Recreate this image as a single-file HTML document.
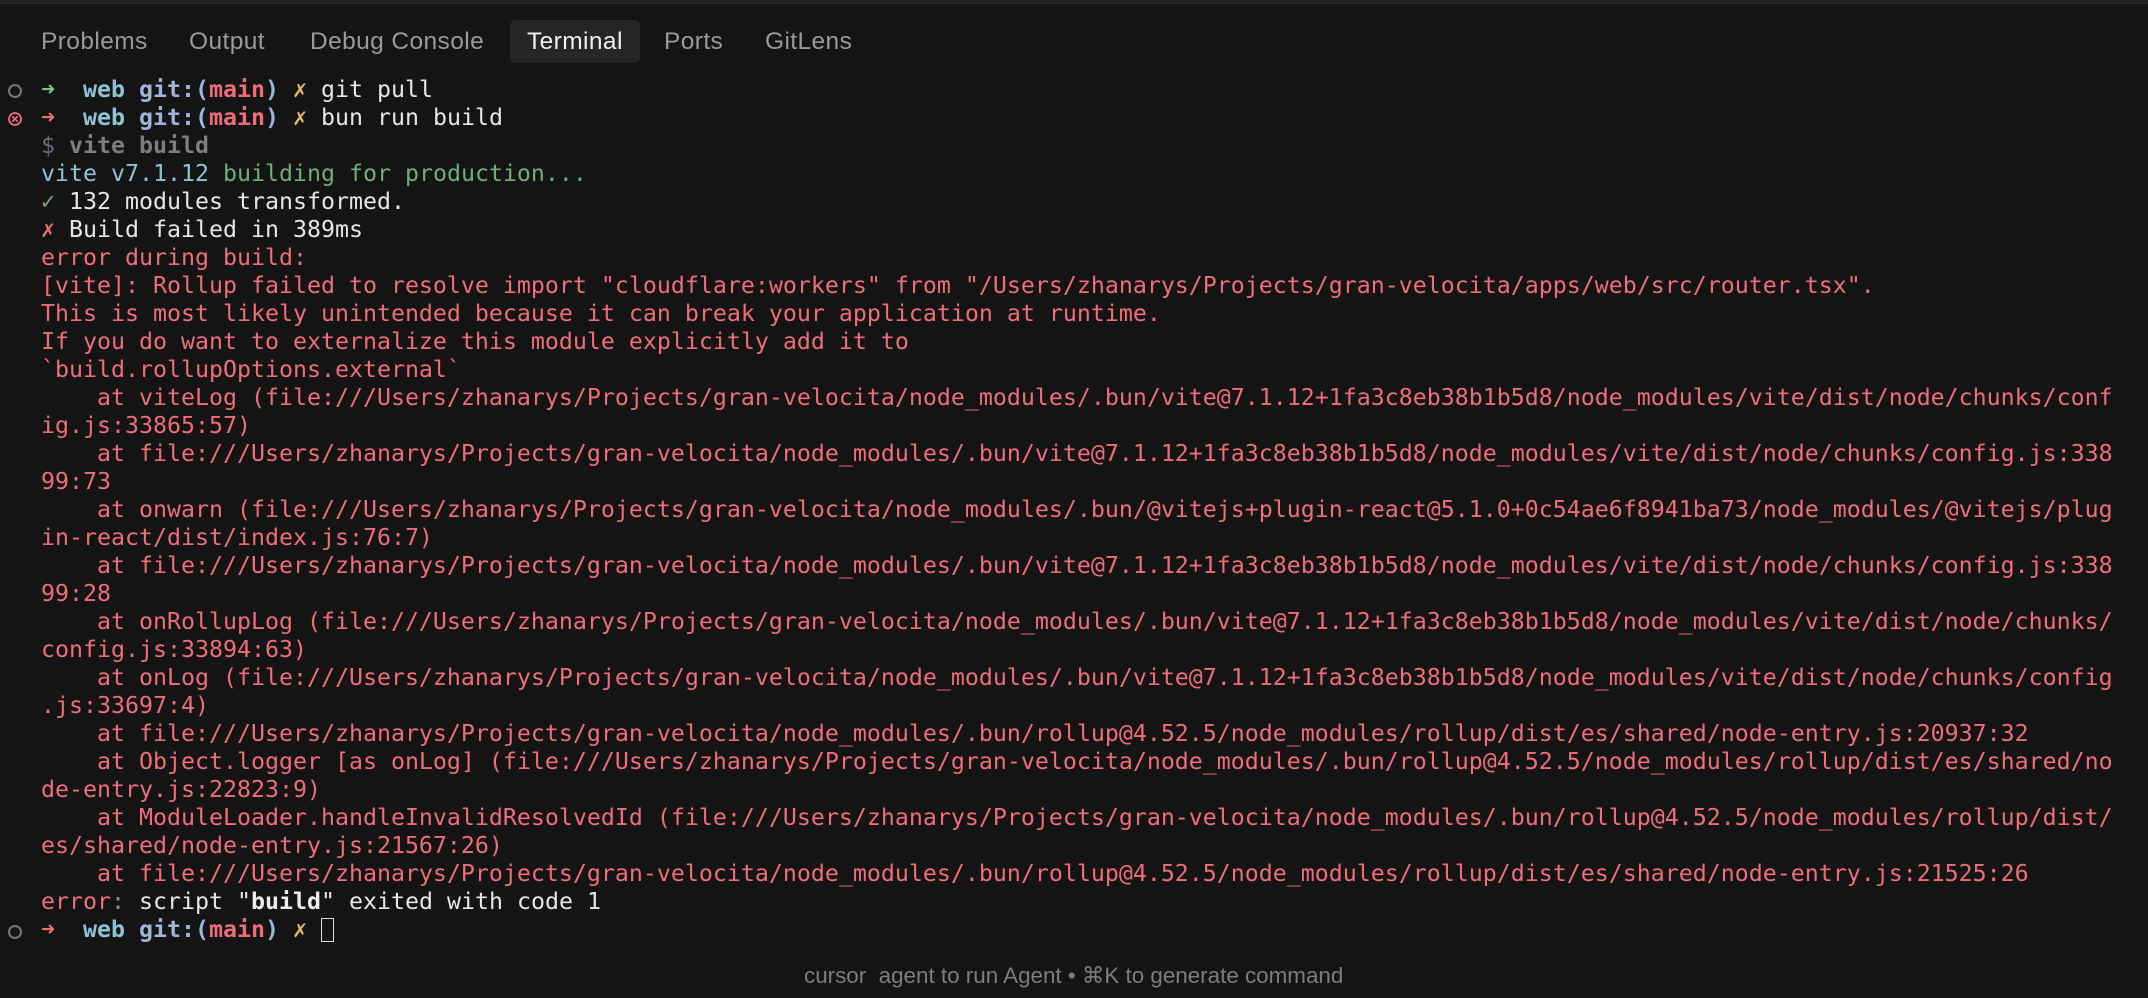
<!DOCTYPE html>
<html><head><meta charset="utf-8"><style>
html,body{margin:0;padding:0;background:#141414;width:2148px;height:998px;overflow:hidden}
.top{position:absolute;left:0;top:0;width:2148px;height:3px;background:#1f1f1f;border-bottom:1px solid #2a2a2a}
.tab{position:absolute;top:20px;height:43px;line-height:43px;font-family:"Liberation Sans",sans-serif;font-size:24.5px;color:#9a9a9a;letter-spacing:0.4px}
.tab.act{background:#262626;color:#f0f0f0;border-radius:6px;padding:0 17px}
.term{position:absolute;left:41px;top:76px;font-family:"DejaVu Sans Mono","Liberation Mono",monospace;font-size:23.25px;color:#e6e6e6}
.l{height:28.03px;line-height:28px;white-space:pre}
.r{color:#ee6d7a}.c{color:#8ec3d6;font-weight:bold}.b{color:#9fb4d8;font-weight:bold}.m{color:#ee6d7a;font-weight:bold}
.y{color:#e8b86a}.g{color:#6fae78}.cy{color:#8ec3d6}.gr{color:#7e7e7e;font-weight:bold}.pu{color:#76687a}
.ga{color:#7fc18a}.w{color:#ececec;font-weight:bold}
.ic{position:absolute;left:7px}
.hint{position:absolute;left:804px;top:963px;font-family:"Liberation Sans",sans-serif;font-size:22.4px;color:#7d7d7d}
.cur{display:inline-block;width:13px;height:24px;border:1.5px solid #dcdcdc;vertical-align:-5px;box-sizing:border-box}
</style></head><body>
<div class="top"></div>
<div class="tab" style="left:41px">Problems</div>
<div class="tab" style="left:189px">Output</div>
<div class="tab" style="left:310px">Debug Console</div>
<div class="tab act" style="left:510px">Terminal</div>
<div class="tab" style="left:664px">Ports</div>
<div class="tab" style="left:765px">GitLens</div>

<svg class="ic" style="top:83px" width="16" height="16"><circle cx="8" cy="8" r="6" fill="none" stroke="#777" stroke-width="2"/></svg>
<svg class="ic" style="top:111px" width="16" height="16"><circle cx="8" cy="8" r="6" fill="none" stroke="#ee6d7a" stroke-width="1.8"/><path d="M5.3 5.3L10.7 10.7M10.7 5.3L5.3 10.7" stroke="#ee6d7a" stroke-width="1.6"/></svg>
<svg class="ic" style="top:924px" width="16" height="16"><circle cx="8" cy="8" r="6" fill="none" stroke="#777" stroke-width="2"/></svg>

<div class="term">
<div class="l"><span class="ga">➜</span>  <span class="c">web</span> <span class="b">git:(</span><span class="m">main</span><span class="b">)</span> <span class="y">✗</span> git pull</div>
<div class="l"><span class="r">➜</span>  <span class="c">web</span> <span class="b">git:(</span><span class="m">main</span><span class="b">)</span> <span class="y">✗</span> bun run build</div>
<div class="l"><span class="pu">$</span> <span class="gr">vite build</span></div>
<div class="l"><span class="cy">vite v7.1.12</span> <span class="g">building for production...</span></div>
<div class="l"><span class="g">✓</span> 132 modules transformed.</div>
<div class="l"><span class="r">✗</span> Build failed in 389ms</div>
<div class="r">
<div class="l">error during build:</div>
<div class="l">[vite]: Rollup failed to resolve import "cloudflare:workers" from "/Users/zhanarys/Projects/gran-velocita/apps/web/src/router.tsx".</div>
<div class="l">This is most likely unintended because it can break your application at runtime.</div>
<div class="l">If you do want to externalize this module explicitly add it to</div>
<div class="l">`build.rollupOptions.external`</div>
<div class="l">    at viteLog (file:///Users/zhanarys/Projects/gran-velocita/node_modules/.bun/vite@7.1.12+1fa3c8eb38b1b5d8/node_modules/vite/dist/node/chunks/conf</div>
<div class="l">ig.js:33865:57)</div>
<div class="l">    at file:///Users/zhanarys/Projects/gran-velocita/node_modules/.bun/vite@7.1.12+1fa3c8eb38b1b5d8/node_modules/vite/dist/node/chunks/config.js:338</div>
<div class="l">99:73</div>
<div class="l">    at onwarn (file:///Users/zhanarys/Projects/gran-velocita/node_modules/.bun/@vitejs+plugin-react@5.1.0+0c54ae6f8941ba73/node_modules/@vitejs/plug</div>
<div class="l">in-react/dist/index.js:76:7)</div>
<div class="l">    at file:///Users/zhanarys/Projects/gran-velocita/node_modules/.bun/vite@7.1.12+1fa3c8eb38b1b5d8/node_modules/vite/dist/node/chunks/config.js:338</div>
<div class="l">99:28</div>
<div class="l">    at onRollupLog (file:///Users/zhanarys/Projects/gran-velocita/node_modules/.bun/vite@7.1.12+1fa3c8eb38b1b5d8/node_modules/vite/dist/node/chunks/</div>
<div class="l">config.js:33894:63)</div>
<div class="l">    at onLog (file:///Users/zhanarys/Projects/gran-velocita/node_modules/.bun/vite@7.1.12+1fa3c8eb38b1b5d8/node_modules/vite/dist/node/chunks/config</div>
<div class="l">.js:33697:4)</div>
<div class="l">    at file:///Users/zhanarys/Projects/gran-velocita/node_modules/.bun/rollup@4.52.5/node_modules/rollup/dist/es/shared/node-entry.js:20937:32</div>
<div class="l">    at Object.logger [as onLog] (file:///Users/zhanarys/Projects/gran-velocita/node_modules/.bun/rollup@4.52.5/node_modules/rollup/dist/es/shared/no</div>
<div class="l">de-entry.js:22823:9)</div>
<div class="l">    at ModuleLoader.handleInvalidResolvedId (file:///Users/zhanarys/Projects/gran-velocita/node_modules/.bun/rollup@4.52.5/node_modules/rollup/dist/</div>
<div class="l">es/shared/node-entry.js:21567:26)</div>
<div class="l">    at file:///Users/zhanarys/Projects/gran-velocita/node_modules/.bun/rollup@4.52.5/node_modules/rollup/dist/es/shared/node-entry.js:21525:26</div>
</div>
<div class="l"><span class="r">error</span><span style="color:#888">:</span> script "<span class="w">build</span>" exited with code 1</div>
<div class="l"><span class="r">➜</span>  <span class="c">web</span> <span class="b">git:(</span><span class="m">main</span><span class="b">)</span> <span class="y">✗</span> <span class="cur"></span></div>
</div>
<div class="hint">cursor&nbsp; agent to run Agent • ⌘K to generate command</div>
</body></html>
